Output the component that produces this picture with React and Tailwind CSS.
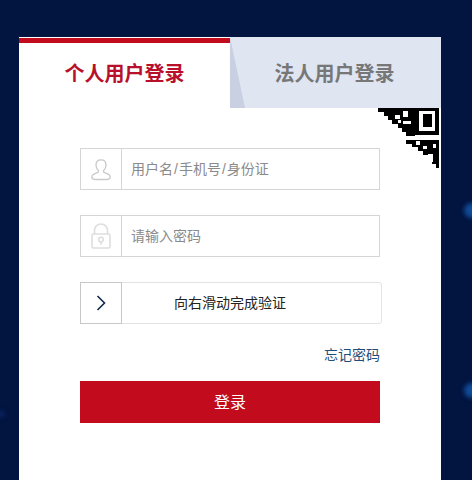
import React from 'react';

// only the corner of the QR code shows, the rest is cut off diagonally
const QrCorner = () => (
  <svg className="absolute top-[71px] right-[1px]" width="64" height="62" viewBox="0 0 64 62">
    <path d="M2 0H39V28H30V24H26V20H22V16H16V12H12V8H8V4H2Z" fill="#000" />
    <rect x="19" y="7" width="5" height="4" fill="#fff" />
    <rect x="27" y="3" width="5" height="6" fill="#fff" />
    <rect x="27" y="13" width="8" height="3" fill="#fff" />
    <rect x="22" y="12" width="3" height="3" fill="#fff" />
    <path d="M39 0h24v27H39z M43 3v20h16V3z" fill="#000" fillRule="evenodd" />
    <rect x="47" y="6" width="9" height="13" fill="#000" />
    <path d="M30 32H63V60H60V56H56V51H52V47H47V43H42V39H36V36H30Z" fill="#000" />
    <rect x="52" y="46" width="5" height="8" fill="#fff" />
    <rect x="40" y="33" width="4" height="4" fill="#fff" />
    <rect x="47" y="38" width="4" height="3" fill="#fff" />
    <rect x="57" y="36" width="3" height="4" fill="#fff" />
  </svg>
);

const UserIcon = () => (
  <svg width="20" height="23" viewBox="0 0 24 26" fill="none" stroke="#c9c9c9" strokeWidth="1.600">
    <path d="M12 1.500c-3.800 0-6 2.700-6 6 0 3 1.300 5.300 2.700 6.700.6.700.4 1.900-.5 2.300l-4.700 2C1.800 19.300 1 20.500 1 21.800 1 23.600 2.500 25 4.500 25h15c2 0 3.500-1.400 3.500-3.200 0-1.300-.8-2.500-2.500-3.300l-4.700-2c-.9-.4-1.100-1.600-.5-2.300 1.400-1.400 2.700-3.700 2.700-6.700 0-3.300-2.200-6-6-6z" />
  </svg>
);

const LockIcon = () => (
  <svg width="20" height="26" viewBox="0 0 20 26" fill="none" stroke="#dedede" strokeWidth="1.600">
    <rect x="1" y="11" width="18" height="14" rx="1.500" />
    <path d="M3.500 11V7.500C3.500 3.800 6.300 1 10 1s6.500 2.800 6.500 6.500V11" />
    <circle cx="10" cy="16.500" r="2.300" />
    <path d="M10 18.800v3" />
  </svg>
);

const Field = ({ icon, children }) => (
  <div className="flex h-[42px] w-[300px] border border-[#d5d5d5] bg-white">
    <div className="flex w-[41px] shrink-0 items-center justify-center border-r border-[#d5d5d5]">
      {icon}
    </div>
    <span className="pl-[9px] text-[14px] leading-[40px] text-[#8a8a8a]">{children}</span>
  </div>
);

export default function App() {
  return (
    <div
      className="relative h-[480px] w-[472px] overflow-hidden bg-[#021440] pl-[19px] pt-[37px] text-[14px]"
      style={{ fontFamily: '"Liberation Sans", "Noto Sans CJK SC", sans-serif' }}
    >
      {/* glow dots in the backdrop */}
      <div className="absolute top-[203px] left-[464px] h-[15px] w-[15px] rounded-full bg-[#114a96] blur-[2px]" />
      <div className="absolute top-[383px] left-[464px] h-[15px] w-[15px] rounded-full bg-[#114a96] blur-[2px]" />
      <div className="absolute top-[410px] -left-[3px] h-[8px] w-[8px] rounded-full bg-[#08225a] blur-[2px]" />

      <div className="relative h-[443px] w-[422px] bg-white">
        {/* tabs */}
        <div className="relative z-10 flex h-[71px]">
          <div className="w-[211px] bg-white">
            <div className="mt-px h-[5px] bg-[#c20c1e]" />
            <div className="pt-[11px] text-center text-[20px] font-bold leading-[40px] text-[#b8102a]">
              个人用户登录
            </div>
          </div>
          <div className="relative flex-1 bg-[#dfe5f1]">
            <svg className="absolute top-0 left-0" width="16" height="71" viewBox="0 0 16 71">
              <path d="M0 0L15 71H0z" fill="#c8d0e2" />
            </svg>
            <div className="pt-[17px] pr-[2px] text-center text-[20px] font-bold leading-[40px] text-[#777777]">
              法人用户登录
            </div>
          </div>
        </div>

        <QrCorner />

        {/* form */}
        <div className="flex flex-col pl-[61px] pt-[40px]">
          <Field icon={<UserIcon />}>
            用户名<span className="px-px">/</span>手机号<span className="px-px">/</span>身份证
          </Field>
          <div className="mt-[25px]">
            <Field icon={<LockIcon />}>请输入密码</Field>
          </div>

          <div className="relative mt-[25px] flex h-[42px] w-[302px] items-center justify-center rounded-[3px] border border-[#e3e3e3] bg-white text-[14px] text-[#222222]">
            <div className="absolute -top-px -left-px flex h-[42px] w-[42px] items-center justify-center border border-[#c8c8c8] bg-white">
              <svg width="10" height="16" viewBox="0 0 10 16" fill="none" stroke="#0f2a4a" strokeWidth="1.600">
                <path d="M1.500 1l7 7-7 7" />
              </svg>
            </div>
            <span className="pr-[2px]">向右滑动完成验证</span>
          </div>

          <div className="mt-[21px] w-[300px] text-right text-[14px] leading-[20px] text-[#1f4e79]">忘记密码</div>

          <div className="mt-[16px] h-[42px] w-[300px] bg-[#c20c1e] text-center text-[16px] leading-[44px] text-white">
            登录
          </div>
        </div>
      </div>
    </div>
  );
}
